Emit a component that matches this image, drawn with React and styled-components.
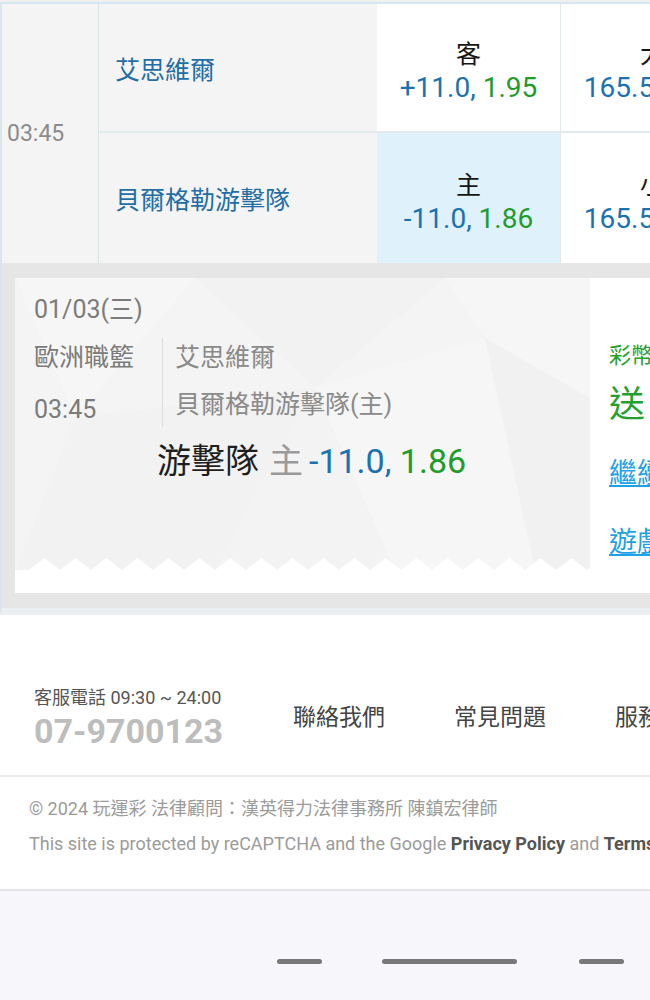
import React from 'react';
import styled, { createGlobalStyle } from 'styled-components';

const GlobalStyle = createGlobalStyle`
  html, body {
    margin: 0;
    padding: 0;
    background: #fff;
  }
  body {
    font-family: Roboto, "Noto Sans CJK TC", sans-serif;
    overflow: hidden;
  }
`;

const Page = styled.div`
  width: 650px;
  height: 1000px;
  overflow: hidden;
  display: flex;
  flex-direction: column;
`;

const TopEdge = styled.div`
  width: 760px;
  height: 2px;
  background: #eef1f3;
  border-bottom: 2px solid #d9e5ec;
`;

// odds table
const Table = styled.div`
  display: grid;
  grid-template-columns: 97px 278px 184px 184px;
  grid-template-rows: 129px 130px;
  width: 745px;
  border-left: 2px solid #d8e6ee;
  background: #f4f4f4;
`;

const TimeCell = styled.div`
  grid-row: 1 / span 2;
  display: flex;
  align-items: center;
  padding-left: 5px;
  border-right: 1px solid #dde4e8;
  color: #8c8c8c;
  font-size: 23px;
`;

const TeamCell = styled.div`
  display: flex;
  align-items: center;
  padding-left: 16px;
  color: #1f6ea6;
  font-size: 25px;
  border-bottom: ${p => (p.$last ? 'none' : '2px solid #e4e9ec')};
`;

const OddsCell = styled.div`
  display: flex;
  flex-direction: column;
  align-items: center;
  justify-content: center;
  background: ${p => (p.$selected ? '#dff1fb' : '#fff')};
  border-right: 1px solid #e2e7ea;
  border-bottom: ${p => (p.$last ? 'none' : '2px solid #e4e9ec')};
  padding-top: 9px;
`;

const OddsLabel = styled.div`
  color: #151515;
  font-size: 25px;
  line-height: 32px;
`;

const OddsValue = styled.div`
  font-size: 28px;
  line-height: 34px;
  white-space: nowrap;
`;

const Blue = styled.span`
  color: #1b72b1;
`;

const Green = styled.span`
  color: #1f9c2a;
`;

// bet slip
const Slip = styled.div`
  width: 760px;
  background: #e6e6e6;
  padding: 15px 0 15px 13px;
  border-left: 2px solid #dae5eb;
  border-bottom: 7px solid #e9eff2;
`;

const Card = styled.div`
  display: flex;
  height: 315px;
  background: #fff;
`;

const LeftSide = styled.div`
  width: 575px;
  flex-shrink: 0;
`;

const Panel = styled.div`
  position: relative;
  height: 292px;
  background: #f4f4f4;
  overflow: hidden;
`;

const PanelArt = styled.svg`
  position: absolute;
  left: 0;
  top: 0;
`;

const PanelContent = styled.div`
  position: relative;
  padding: 17px 0 0 19px;
`;

const DateLine = styled.div`
  color: #7b7b7b;
  font-size: 25px;
  line-height: 30px;
`;

const InfoRow = styled.div`
  display: flex;
  margin-top: 13px;
`;

const LeagueCol = styled.div`
  width: 128px;
  display: flex;
  flex-direction: column;
  gap: 12px;
  color: #7b7b7b;
  font-size: 25px;
`;

const TeamsCol = styled.div`
  display: flex;
  flex-direction: column;
  gap: 7px;
  height: 89px;
  padding-left: 12px;
  border-left: 1px solid #dcdcdc;
  color: #8a8a8a;
  font-size: 25px;
`;

const Line40 = styled.div`
  line-height: 40px;
  white-space: nowrap;
`;

const BetLine = styled.div`
  margin: 11px 0 0 123px;
  font-size: 34px;
  line-height: 40px;
  white-space: nowrap;
`;

const BetTeam = styled.span`
  color: #1e1e1e;
`;

const BetSide = styled.span`
  color: #9a9a9a;
  margin: 0 6px 0 10px;
`;

const RightSide = styled.div`
  display: flex;
  flex-direction: column;
  padding: 63px 0 0 19px;
  white-space: nowrap;
`;

const Promo = styled.div`
  color: #23a12c;
  font-size: ${p => p.$size}px;
  line-height: ${p => p.$lh}px;
  margin-top: ${p => p.$gap || 0}px;
`;

const ActionLink = styled.a`
  color: #1ca2e6;
  font-size: 28px;
  line-height: 40px;
  text-decoration: underline;
  margin-top: ${p => p.$gap}px;
`;

// footer
const Footer = styled.div`
  background: #fff;
  width: 760px;
`;

const ContactRow = styled.div`
  display: flex;
  align-items: center;
  gap: 70px;
  height: 162px;
  padding: 40px 0 0 34px;
  box-sizing: border-box;
  border-bottom: 2px solid #ececec;
`;

const Phone = styled.div`
  display: flex;
  flex-direction: column;
  margin-top: 8px;
`;

const PhoneLabel = styled.div`
  color: #555;
  font-size: 18px;
  line-height: 24px;
`;

const PhoneNumber = styled.div`
  color: #bdbdbd;
  font-size: 34px;
  font-weight: 700;
  line-height: 42px;
`;

const FooterLink = styled.div`
  color: #444;
  font-size: 23px;
  margin-right: -1px;
`;

const Legal = styled.div`
  height: 114px;
  padding: 14px 0 0 29px;
  box-sizing: border-box;
  color: #9b9b9b;
  font-size: 18px;
  border-bottom: 2px solid #e3e3e8;
`;

const LegalLine = styled.div`
  line-height: 35px;
  white-space: nowrap;
`;

const Strong = styled.b`
  color: #555;
`;

const NavBar = styled.div`
  flex: 1;
  background: #f7f7fb;
  display: flex;
  align-items: flex-start;
  padding-top: 68px;
`;

const NavPill = styled.div`
  height: 5px;
  border-radius: 3px;
  background: #787878;
  width: ${p => p.$w}px;
  margin-left: ${p => p.$ml}px;
`;

function Zigzag() {
  const teeth = [];
  for (let i = 0; i < 20; i++) {
    const x = 14 + i * 31;
    teeth.push(`M${x} 292 L${x + 15.5} 280 L${x + 31} 292 Z`);
  }
  return <path d={teeth.join(' ')} fill="#fff" />;
}

function Facets() {
  return (
    <g>
      <polygon points="0,0 180,0 60,140" fill="#f6f6f6" />
      <polygon points="180,0 430,0 300,110" fill="#f2f2f2" />
      <polygon points="430,0 575,0 575,120 470,60" fill="#f6f6f6" />
      <polygon points="60,140 300,110 200,292 0,292" fill="#f2f2f2" />
      <polygon points="300,110 470,60 520,292 380,292" fill="#f6f6f6" />
      <polygon points="575,120 470,60 520,292 575,292" fill="#f1f1f1" />
      <polygon points="200,292 300,110 380,292" fill="#f3f3f3" />
    </g>
  );
}

export default function App() {
  return (
    <Page>
      <GlobalStyle />
      <TopEdge />
      <Table>
        <TimeCell>03:45</TimeCell>
        <TeamCell>艾思維爾</TeamCell>
        <OddsCell>
          <OddsLabel>客</OddsLabel>
          <OddsValue><Blue>+11.0,</Blue> <Green>1.95</Green></OddsValue>
        </OddsCell>
        <OddsCell>
          <OddsLabel>大</OddsLabel>
          <OddsValue><Blue>165.5,</Blue> <Green>1.90</Green></OddsValue>
        </OddsCell>
        <TeamCell $last>貝爾格勒游擊隊</TeamCell>
        <OddsCell $selected $last>
          <OddsLabel>主</OddsLabel>
          <OddsValue><Blue>-11.0,</Blue> <Green>1.86</Green></OddsValue>
        </OddsCell>
        <OddsCell $last>
          <OddsLabel>小</OddsLabel>
          <OddsValue><Blue>165.5,</Blue> <Green>1.80</Green></OddsValue>
        </OddsCell>
      </Table>

      <Slip>
        <Card>
          <LeftSide>
            <Panel>
              <PanelArt width="575" height="292" viewBox="0 0 575 292">
                <Facets />
                <Zigzag />
              </PanelArt>
              <PanelContent>
                <DateLine>01/03(三)</DateLine>
                <InfoRow>
                  <LeagueCol>
                    <Line40>歐洲職籃</Line40>
                    <Line40>03:45</Line40>
                  </LeagueCol>
                  <TeamsCol>
                    <Line40>艾思維爾</Line40>
                    <Line40>貝爾格勒游擊隊(主)</Line40>
                  </TeamsCol>
                </InfoRow>
                <BetLine>
                  <BetTeam>游擊隊</BetTeam>
                  <BetSide>主</BetSide>
                  <Blue>-11.0,</Blue> <Green>1.86</Green>
                </BetLine>
              </PanelContent>
            </Panel>
          </LeftSide>
          <RightSide>
            <Promo $size={22} $lh={30}>彩幣回饋</Promo>
            <Promo $size={36} $lh={44} $gap={12}>送 100</Promo>
            <ActionLink $gap={27}>繼續投注</ActionLink>
            <ActionLink $gap={29}>遊戲紀錄</ActionLink>
          </RightSide>
        </Card>
      </Slip>

      <Footer>
        <ContactRow>
          <Phone>
            <PhoneLabel>客服電話 09:30 ~ 24:00</PhoneLabel>
            <PhoneNumber>07-9700123</PhoneNumber>
          </Phone>
          <FooterLink>聯絡我們</FooterLink>
          <FooterLink>常見問題</FooterLink>
          <FooterLink>服務條款</FooterLink>
        </ContactRow>
        <Legal>
          <LegalLine>© 2024 玩運彩 法律顧問：漢英得力法律事務所 陳鎮宏律師</LegalLine>
          <LegalLine>
            This site is protected by reCAPTCHA and the Google <Strong>Privacy Policy</Strong> and <Strong>Terms of Service</Strong> apply.
          </LegalLine>
        </Legal>
      </Footer>

      <NavBar>
        <NavPill $w={45} $ml={277} />
        <NavPill $w={135} $ml={60} />
        <NavPill $w={45} $ml={62} />
      </NavBar>
    </Page>
  );
}
